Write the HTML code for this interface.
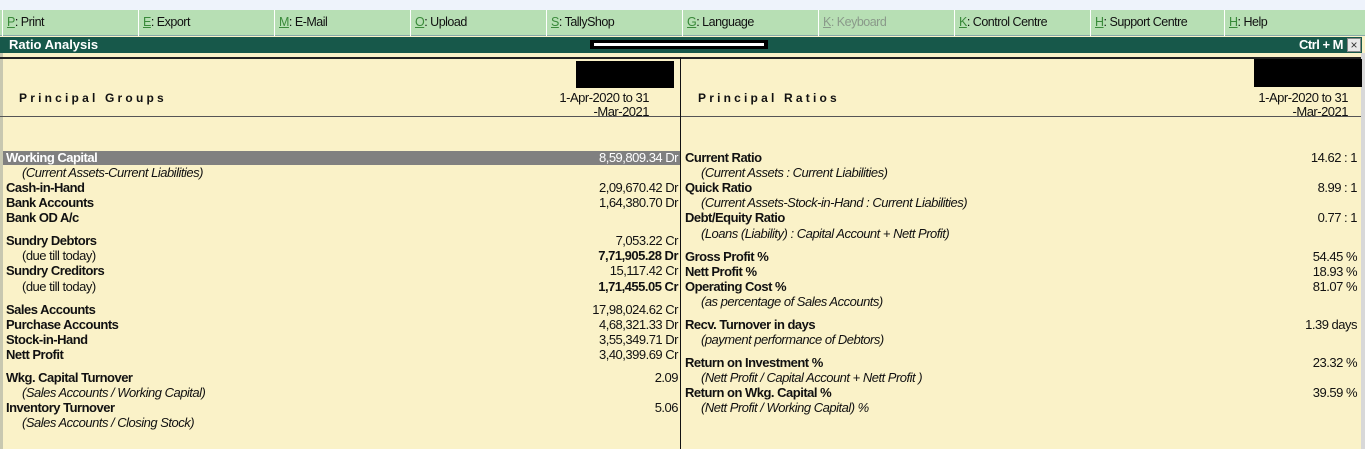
<!DOCTYPE html>
<html><head><meta charset="utf-8"><style>
*{margin:0;padding:0;box-sizing:border-box}
body{width:1365px;height:449px;overflow:hidden;background:#faf2c8;font-family:"Liberation Sans",sans-serif;font-size:13px;color:#111;position:relative}
.a{position:absolute;white-space:nowrap;line-height:14px;letter-spacing:-0.5px}
.b{font-weight:bold}
.i{font-style:italic}
.r{text-align:right}
#top{position:absolute;left:0;top:0;width:1365px;height:10px;background:#eef3fb}
#bar{position:absolute;left:0;top:10px;width:1365px;height:26px;background:#b7dfb4;border-bottom:1px solid #8aa}
.btn{position:absolute;top:10px;height:26px;line-height:25px;padding-left:4px;border-left:1px solid #fff;font-size:12.5px;letter-spacing:-0.5px;color:#111}
.btn u{color:#3a8a3a;text-decoration:underline}
#title{position:absolute;left:0;top:37px;width:1362px;height:16px;background:#17584a;color:#fff;font-weight:bold;font-size:13px;line-height:16px;padding-left:9px}
</style></head><body>
<div id="top"></div>
<div id="bar"></div>
<div class="btn" style="left:2px"><u>P</u>: Print</div>
<div class="btn" style="left:138px"><u>E</u>: Export</div>
<div class="btn" style="left:274px"><u>M</u>: E-Mail</div>
<div class="btn" style="left:410px"><u>O</u>: Upload</div>
<div class="btn" style="left:546px"><u>S</u>: TallyShop</div>
<div class="btn" style="left:682px"><u>G</u>: Language</div>
<div class="btn" style="left:818px;color:#8a9a8a"><u style="color:#8a9a8a">K</u>: Keyboard</div>
<div class="btn" style="left:954px"><u>K</u>: Control Centre</div>
<div class="btn" style="left:1090px"><u>H</u>: Support Centre</div>
<div class="btn" style="left:1224px"><u>H</u>: Help</div>
<div id="title">Ratio Analysis</div>
<div class="a b" style="right:22px;top:38px;color:#fff">Ctrl + M</div>
<div style="position:absolute;left:1347px;top:38px;width:14px;height:14px;background:#e8e8e8;border:1px solid #888;color:#333;font-size:12px;line-height:12px;text-align:center">×</div>
<div style="position:absolute;left:590px;top:40px;width:178px;height:9px;background:#000"></div>
<div style="position:absolute;left:594px;top:43px;width:170px;height:3px;background:#fff"></div>
<div style="position:absolute;left:0;top:53px;width:3px;height:396px;background:#c8c8b0"></div>
<div style="position:absolute;left:0;top:57px;width:1362px;height:2px;background:#222"></div>
<div style="position:absolute;left:0;top:116px;width:1362px;height:1px;background:#555"></div>
<div style="position:absolute;left:680px;top:57px;width:1px;height:392px;background:#111"></div>
<div style="position:absolute;left:1361px;top:53px;width:4px;height:396px;background:#d8d8d8"></div>
<div style="position:absolute;left:576px;top:61px;width:98px;height:27px;background:#000"></div>
<div style="position:absolute;left:1254px;top:59px;width:108px;height:28px;background:#000"></div>
<div class="a b" style="left:19px;top:91px;letter-spacing:3.2px;font-size:12px">Principal Groups</div>
<div class="a b" style="left:698px;top:91px;letter-spacing:3.2px;font-size:12px">Principal Ratios</div>
<div class="a r" style="right:716px;top:91px;line-height:14px">1-Apr-2020 to 31<br>-Mar-2021</div>
<div class="a r" style="right:17px;top:91px;line-height:14px">1-Apr-2020 to 31<br>-Mar-2021</div>
<div style="position:absolute;left:3px;top:151px;width:677px;height:14px;background:#808080"></div>
<div class="a b" style="left:6px;top:151px;color:#fff">Working Capital</div>
<div class="a r" style="right:687px;top:151px;color:#fff">8,59,809.34 Dr</div>
<div class="a i" style="left:22px;top:166px">(Current Assets-Current Liabilities)</div>
<div class="a b" style="left:6px;top:181px">Cash-in-Hand</div><div class="a r" style="right:687px;top:181px">2,09,670.42 Dr</div>
<div class="a b" style="left:6px;top:196px">Bank Accounts</div><div class="a r" style="right:687px;top:196px">1,64,380.70 Dr</div>
<div class="a b" style="left:6px;top:211px">Bank OD A/c</div>
<div class="a b" style="left:6px;top:234px">Sundry Debtors</div><div class="a r" style="right:687px;top:234px">7,053.22 Cr</div>
<div class="a" style="left:22px;top:249px">(due till today)</div><div class="a r b" style="right:687px;top:249px">7,71,905.28 Dr</div>
<div class="a b" style="left:6px;top:264px">Sundry Creditors</div><div class="a r" style="right:687px;top:264px">15,117.42 Cr</div>
<div class="a" style="left:22px;top:280px">(due till today)</div><div class="a r b" style="right:687px;top:280px">1,71,455.05 Cr</div>
<div class="a b" style="left:6px;top:303px">Sales Accounts</div><div class="a r" style="right:687px;top:303px">17,98,024.62 Cr</div>
<div class="a b" style="left:6px;top:318px">Purchase Accounts</div><div class="a r" style="right:687px;top:318px">4,68,321.33 Dr</div>
<div class="a b" style="left:6px;top:333px">Stock-in-Hand</div><div class="a r" style="right:687px;top:333px">3,55,349.71 Dr</div>
<div class="a b" style="left:6px;top:348px">Nett Profit</div><div class="a r" style="right:687px;top:348px">3,40,399.69 Cr</div>
<div class="a b" style="left:6px;top:371px">Wkg. Capital Turnover</div><div class="a r" style="right:687px;top:371px">2.09</div>
<div class="a i" style="left:22px;top:386px">(Sales Accounts / Working Capital)</div>
<div class="a b" style="left:6px;top:401px">Inventory Turnover</div><div class="a r" style="right:687px;top:401px">5.06</div>
<div class="a i" style="left:22px;top:416px">(Sales Accounts / Closing Stock)</div>

<div class="a b" style="left:685px;top:151px">Current Ratio</div><div class="a r" style="right:8px;top:151px">14.62 : 1</div>
<div class="a i" style="left:701px;top:166px">(Current Assets : Current Liabilities)</div>
<div class="a b" style="left:685px;top:181px">Quick Ratio</div><div class="a r" style="right:8px;top:181px">8.99 : 1</div>
<div class="a i" style="left:701px;top:196px">(Current Assets-Stock-in-Hand : Current Liabilities)</div>
<div class="a b" style="left:685px;top:211px">Debt/Equity Ratio</div><div class="a r" style="right:8px;top:211px">0.77 : 1</div>
<div class="a i" style="left:701px;top:227px">(Loans (Liability) : Capital Account + Nett Profit)</div>
<div class="a b" style="left:685px;top:250px">Gross Profit %</div><div class="a r" style="right:8px;top:250px">54.45 %</div>
<div class="a b" style="left:685px;top:265px">Nett Profit %</div><div class="a r" style="right:8px;top:265px">18.93 %</div>
<div class="a b" style="left:685px;top:280px">Operating Cost %</div><div class="a r" style="right:8px;top:280px">81.07 %</div>
<div class="a i" style="left:701px;top:295px">(as percentage of Sales Accounts)</div>
<div class="a b" style="left:685px;top:318px">Recv. Turnover in days</div><div class="a r" style="right:8px;top:318px">1.39 days</div>
<div class="a i" style="left:701px;top:333px">(payment performance of Debtors)</div>
<div class="a b" style="left:685px;top:356px">Return on Investment %</div><div class="a r" style="right:8px;top:356px">23.32 %</div>
<div class="a i" style="left:701px;top:371px">(Nett Profit / Capital Account + Nett Profit )</div>
<div class="a b" style="left:685px;top:386px">Return on Wkg. Capital %</div><div class="a r" style="right:8px;top:386px">39.59 %</div>
<div class="a i" style="left:701px;top:401px">(Nett Profit / Working Capital) %</div>
</body></html>
